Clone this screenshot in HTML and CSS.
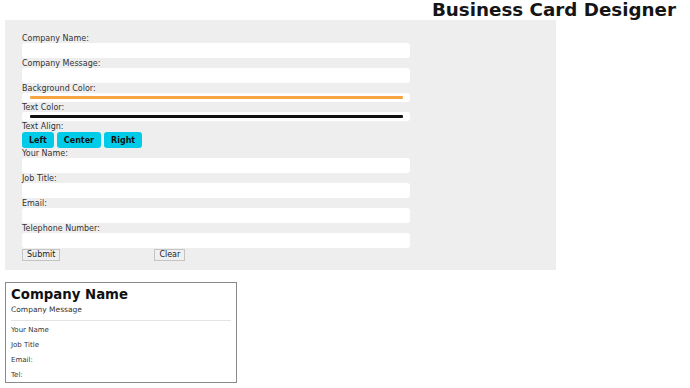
FILE: index.html
```html
<!DOCTYPE html>
<html lang="en">
<head>
  <meta charset="UTF-8">
  <title>Business Card Designer</title>
  <link rel="stylesheet" href="styles.css">

  <script>
    window.onload = function() {
      const card = document.getElementById('card');

      function bind(inputId, outputId, prefix, fallback) {
        document.getElementById(inputId).oninput = function () {
          document.getElementById(outputId).textContent = prefix + (this.value || fallback);
        };
      }

      bind('companyName', 'cardCompany', '', 'Company Name');
      bind('companyMessage', 'cardMessage', '', 'Company Message');
      bind('yourName', 'cardName', '', 'Your Name');
      bind('jobTitle', 'cardJob', '', 'Job Title');
      bind('email', 'cardEmail', 'Email: ', '');
      bind('phone', 'cardTel', 'Tel: ', '');

      document.getElementById('bgColor').oninput = function () {
        card.style.backgroundColor = this.value;
      };
      document.getElementById('textColor').oninput = function () {
        card.style.color = this.value;
      };

      document.querySelectorAll('.align-btn').forEach(function (btn) {
        btn.onclick = function () {
          card.style.textAlign = this.dataset.align;
        };
      });
    };
  </script>
</head>
<body>
  <h1 class="page-title">Business Card Designer</h1>

  <!-- Designer form -->
  <form class="designer" onsubmit="return false">
    <label for="companyName">Company Name:</label>
    <input type="text" id="companyName">

    <label for="companyMessage">Company Message:</label>
    <input type="text" id="companyMessage">

    <label for="bgColor">Background Color:</label>
    <input type="color" id="bgColor" value="#f8a443">

    <label for="textColor">Text Color:</label>
    <input type="color" id="textColor" value="#111111">

    <label>Text Align:</label>
    <div class="align-group">
      <button type="button" class="align-btn" data-align="left">Left</button>
      <button type="button" class="align-btn" data-align="center">Center</button>
      <button type="button" class="align-btn" data-align="right">Right</button>
    </div>

    <label for="yourName">Your Name:</label>
    <input type="text" id="yourName">

    <label for="jobTitle">Job Title:</label>
    <input type="text" id="jobTitle">

    <label for="email">Email:</label>
    <input type="text" id="email">

    <label for="phone">Telephone Number:</label>
    <input type="text" id="phone">

    <div class="form-actions">
      <button type="submit" class="plain-btn">Submit</button>
      <button type="reset" class="plain-btn clear-btn">Clear</button>
    </div>
  </form>

  <!-- Card preview -->
  <div class="card" id="card">
    <h2 class="card-company" id="cardCompany">Company Name</h2>
    <p class="card-message" id="cardMessage">Company Message</p>
    <hr class="card-divider">
    <p class="card-line" id="cardName">Your Name</p>
    <p class="card-line" id="cardJob">Job Title</p>
    <p class="card-line" id="cardEmail">Email:</p>
    <p class="card-line" id="cardTel">Tel:</p>
  </div>
</body>
</html>
```

FILE: styles.css
```css
/* General Styles */
body {
  font-family: "DejaVu Sans", Verdana, sans-serif;
  margin: 0;
  padding: 0;
  color: #222;
}

.page-title {
  margin: 0;
  padding-right: 14px;
  text-align: right;
  font-size: 18.3px;
  line-height: 20px;
  font-weight: bold;
  color: #151515;
}

/* Designer form */
.designer {
  width: 534px;
  height: 237px;
  margin-left: 5px;
  padding: 13px 0 0 17px;
  background-color: #eeeeee;
}

.designer label {
  display: block;
  height: 10px;
  padding-top: 1px;
  box-sizing: border-box;
  line-height: 9px;
  font-size: 8px;
  color: #333;
}

.designer input[type="text"] {
  display: block;
  width: 388px;
  height: 15px;
  box-sizing: border-box;
  border: none;
  border-radius: 3px;
  background: #fff;
  padding: 0 4px;
  font-size: 8px;
}

.designer input[type="color"] {
  -webkit-appearance: none;
  appearance: none;
  display: block;
  width: 388px;
  height: 9px;
  box-sizing: border-box;
  border: none;
  border-radius: 3px;
  padding: 0;
  background: #fff;
  cursor: pointer;
}

.designer input[type="color"]::-webkit-color-swatch-wrapper {
  padding: 3px 7px 3px 8px;
}

.designer input[type="color"]::-webkit-color-swatch {
  border: none;
  border-radius: 1px;
}

.align-group {
  display: flex;
  gap: 3px;
  margin: 1px 0 0;
  height: 16px;
}

.align-btn {
  padding: 0 7px;
  height: 16px;
  border: none;
  border-radius: 3px;
  background-color: #00ccea;
  color: #111;
  font-family: inherit;
  font-size: 8px;
  font-weight: bold;
  cursor: pointer;
}

.form-actions {
  display: flex;
  margin-top: 1px;
}

.plain-btn {
  height: 12px;
  padding: 0 4px;
  border: 1px solid #c4c4c4;
  background: #efefef;
  color: #222;
  font-family: inherit;
  font-size: 8px;
  line-height: 10px;
}

.clear-btn {
  margin-left: 94px;
}

/* Card preview */
.card {
  box-sizing: border-box;
  width: 232px;
  height: 101px;
  margin: 12px 0 0 5px;
  padding: 0 5px;
  border: 1px solid #8a8a8a;
  background: #fff;
  color: #111;
}

.card-company {
  margin: 4px 0 0;
  font-size: 13.3px;
  line-height: 16px;
  font-weight: bold;
}

.card-message {
  margin: 2px 0 0;
  font-size: 7.5px;
  line-height: 9px;
  color: #333;
}

.card-divider {
  margin: 6px 0 0;
  border: none;
  border-top: 1px solid #e4e4e4;
}

.card-line {
  margin: 0;
  height: 15px;
  line-height: 15px;
  font-size: 7px;
  color: #333;
}

.card-divider + .card-line {
  margin-top: 2px;
}
```
